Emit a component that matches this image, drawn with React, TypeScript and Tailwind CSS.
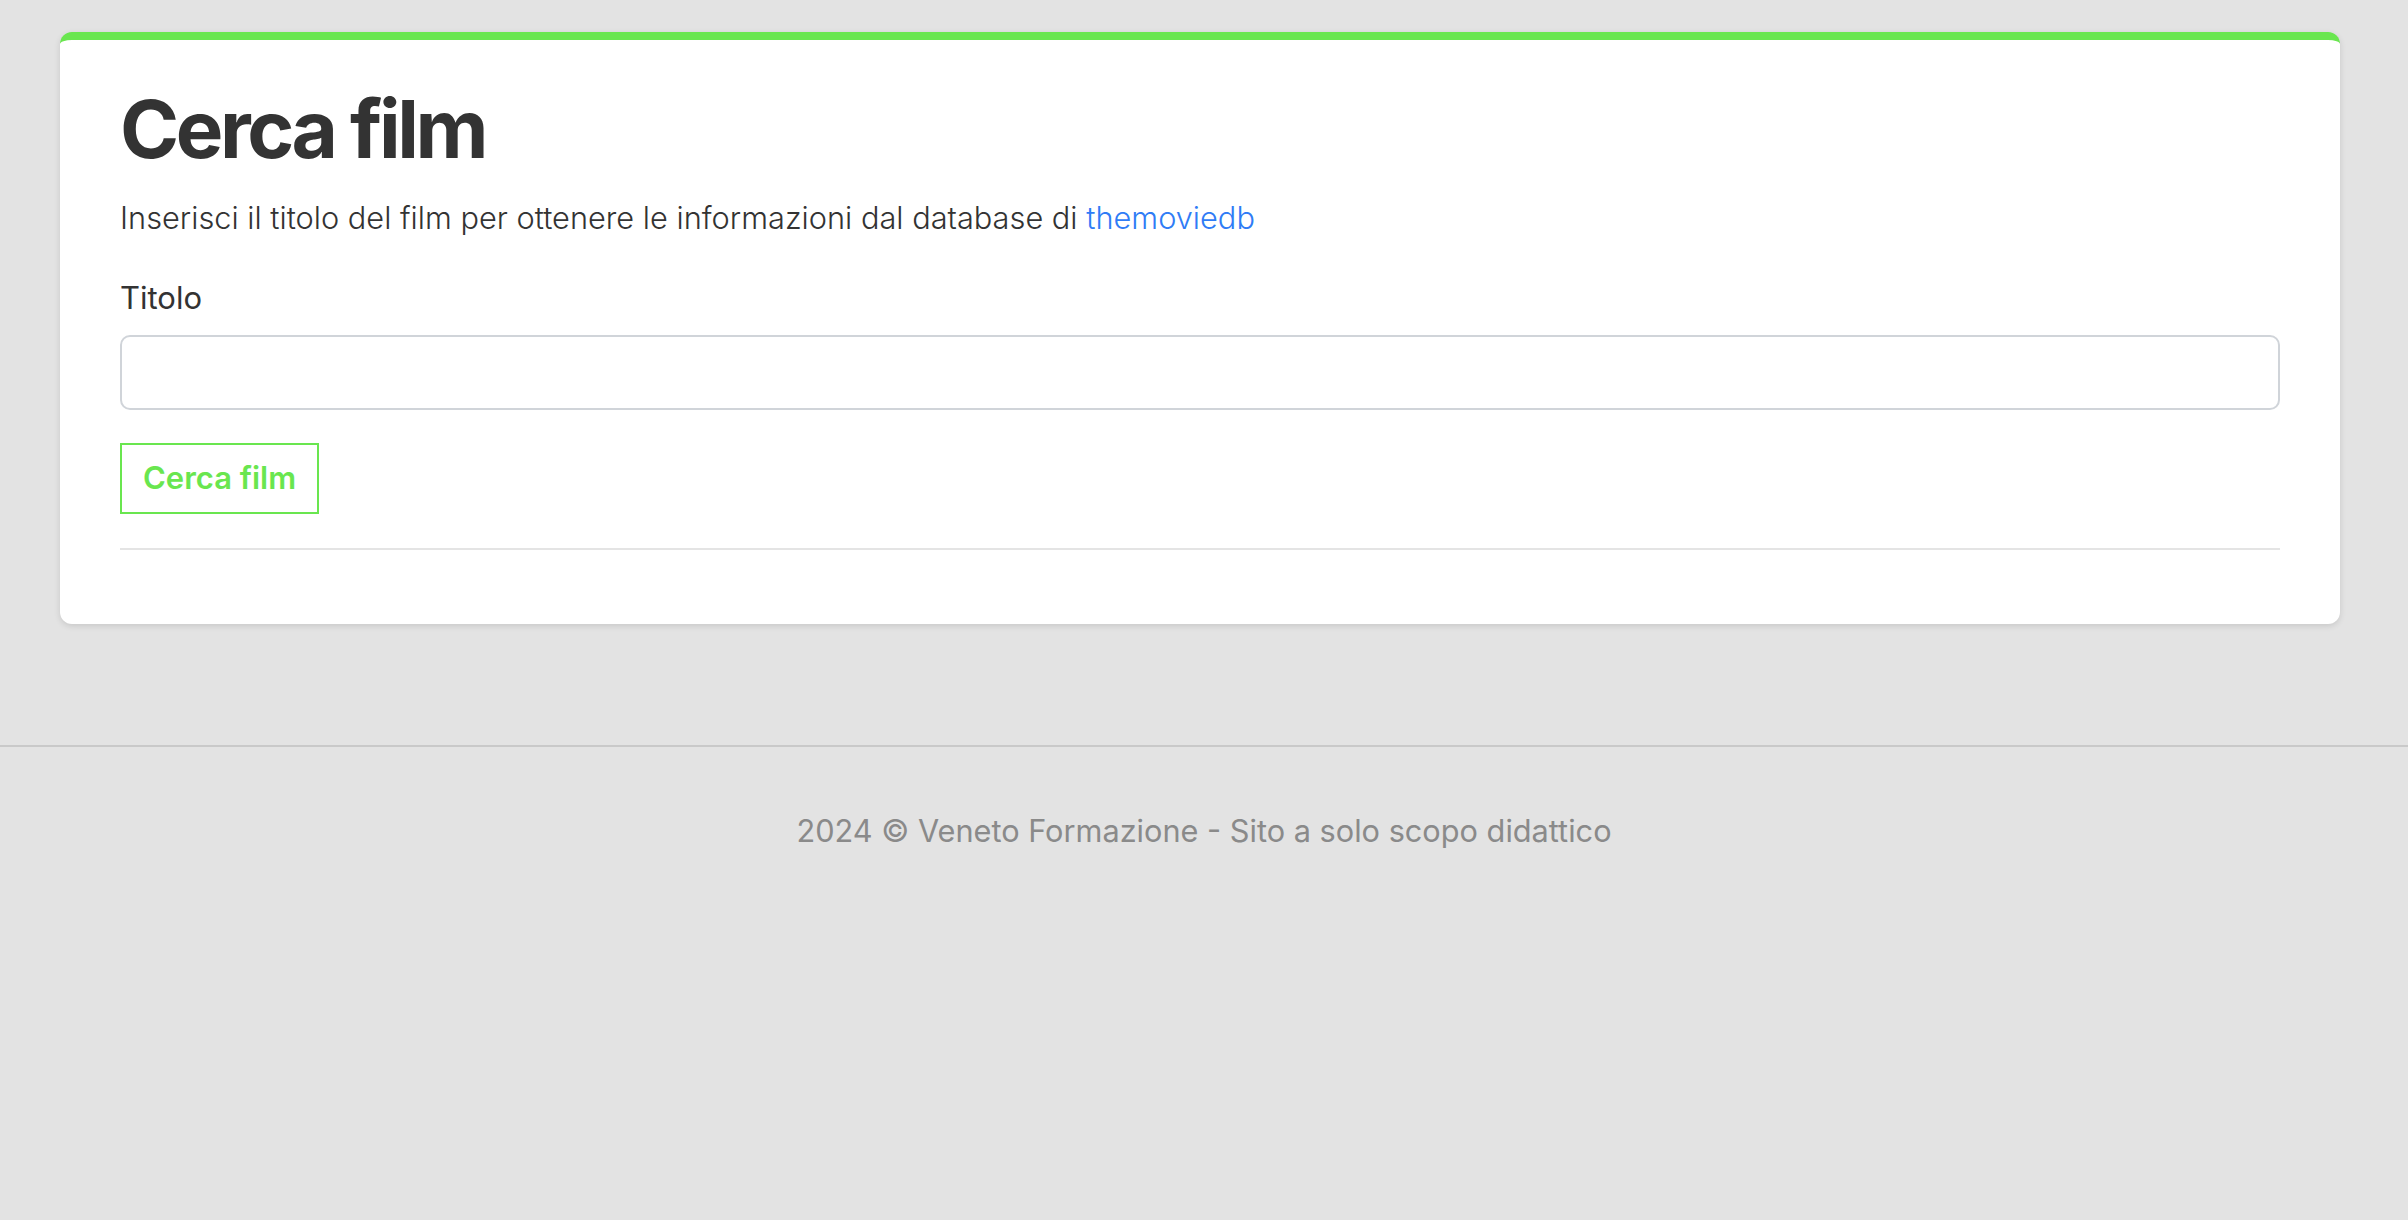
export default function App() {
  return (
    <div className="min-h-screen bg-[#e3e3e3] font-['Inter','Liberation_Sans',sans-serif] text-[#333333]">
      <main className="pl-[60px] pr-[68px] pt-[32px]">
        <section className="rounded-[12px] border-t-[8px] border-[#69e64f] bg-white px-[60px] pb-[74px] pt-[41px] shadow-[0_2px_6px_rgba(0,0,0,0.12)]">
          <h1 className="text-[80px] font-bold leading-[96px] tracking-[-0.043em]">Cerca film</h1>
          <p className="mt-[18px] text-[30.75px] font-light leading-[45px]">
            Inserisci il titolo del film per ottenere le informazioni dal database di{" "}
            <a href="#" className="text-[#2f7cf6]">
              themoviedb
            </a>
          </p>
          <label htmlFor="titolo" className="mt-[35px] block text-[31px] leading-[45px]">
            Titolo
          </label>
          <input
            id="titolo"
            type="text"
            className="mt-[15px] block h-[75px] w-full rounded-[10px] border-2 border-[#d0d4d9] bg-white px-6 text-[30px] outline-none"
          />
          <button
            type="button"
            className="mt-[33px] block h-[71px] border-2 border-[#69e64f] px-[21px] text-[31px] font-semibold text-[#69e64f]"
          >
            Cerca film
          </button>
          <hr className="mt-[34px] border-t-2 border-[#e4e4e4]" />
        </section>
      </main>
      <footer className="mt-[121px] border-t-2 border-[#c9c9c9] pt-[60px] text-center text-[30.7px] leading-[48px] text-[#8a8a8a]">
        2024 © Veneto Formazione - Sito a solo scopo didattico
      </footer>
    </div>
  );
}
